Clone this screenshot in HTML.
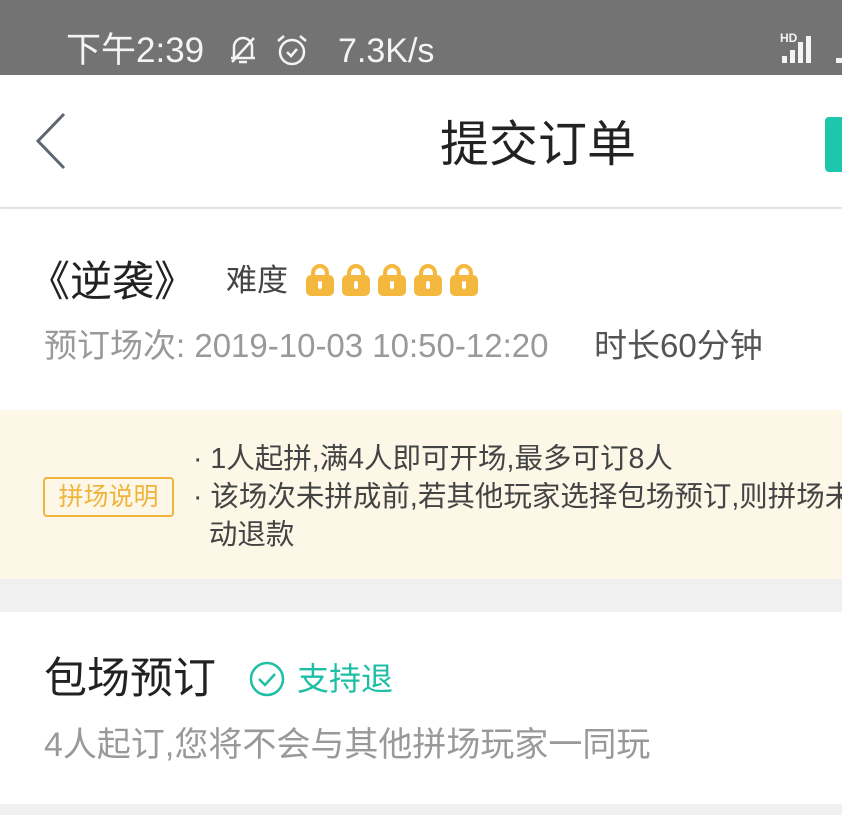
<!DOCTYPE html>
<html><head><meta charset="utf-8"><style>
*{margin:0;padding:0;box-sizing:border-box}
body{width:842px;height:815px;overflow:hidden;background:#f0f0f0;font-family:"Liberation Sans","Noto Sans CJK SC",sans-serif;position:relative}
.a{position:absolute;white-space:nowrap;line-height:1}
</style></head><body>
<div class="a" style="left:0;top:0;width:842px;height:75px;background:#737373"></div>
<div class="a" style="left:66px;top:33px;font-size:35px;color:#f4f4f4">下午2:39</div>
<svg class="a" style="left:226px;top:32px" width="34" height="36" viewBox="0 0 34 36" fill="none" stroke="#f4f4f4" stroke-width="2.5"><path d="M8 26V15a9 9 0 0 1 18 0v11H5h24M13 30h8M6 30L28 6"/></svg>
<svg class="a" style="left:274px;top:32px" width="36" height="36" viewBox="0 0 36 36" fill="none" stroke="#f4f4f4" stroke-width="2.5"><circle cx="18" cy="20" r="12"/><path d="M13 20l4 4 6-7M4 9l6-5M32 9l-6-5"/></svg>
<div class="a" style="left:338px;top:34px;font-size:34px;color:#f4f4f4">7.3K/s</div>
<div class="a" style="left:780px;top:32px;font-size:12px;font-weight:bold;color:#f4f4f4">HD</div>
<svg class="a" style="left:782px;top:34px" width="60" height="30"><g fill="#f4f4f4"><rect x="0" y="22" width="5" height="7"/><rect x="8" y="16" width="5" height="13"/><rect x="16" y="8" width="5" height="21"/><rect x="24" y="2" width="5" height="27"/><rect x="54" y="24" width="6" height="5"/></g></svg>

<div class="a" style="left:0;top:75px;width:842px;height:132px;background:#fff;box-shadow:0 2px 3px rgba(0,0,0,.08)"></div>
<svg class="a" style="left:30px;top:110px" width="40" height="62"><path d="M34 4L8 31l26 27" fill="none" stroke="#5f6670" stroke-width="3"/></svg>
<div class="a" style="left:440px;top:121px;font-size:49px;color:#222">提交订单</div>
<div class="a" style="left:825px;top:117px;width:30px;height:55px;background:#1fc6ae;border-radius:4px"></div>

<div class="a" style="left:0;top:209px;width:842px;height:201px;background:#fff"></div>
<div class="a" style="left:28px;top:261px;font-size:42px;color:#222">《逆袭》</div>
<div class="a" style="left:226px;top:265px;font-size:31px;color:#444">难度</div>
<svg class="a" style="left:304px;top:260px" width="180" height="38"><g fill="#f3b83d">
<g id="l"><path d="M7 13a9 9 0 0 1 18 0v4h-4v-4a5 5 0 0 0-10 0v4H7z"/><rect x="2" y="15" width="28" height="21" rx="5"/></g>
<use href="#l" x="36"/><use href="#l" x="72"/><use href="#l" x="108"/><use href="#l" x="144"/></g>
<g fill="#fff"><rect x="14" y="21" width="4" height="8" rx="2"/><rect x="50" y="21" width="4" height="8" rx="2"/><rect x="86" y="21" width="4" height="8" rx="2"/><rect x="122" y="21" width="4" height="8" rx="2"/><rect x="158" y="21" width="4" height="8" rx="2"/></g></svg>
<div class="a" style="left:44px;top:329px;font-size:33px;color:#999">预订场次: 2019-10-03 10:50-12:20</div>
<div class="a" style="left:594px;top:329px;font-size:33px;color:#555">时长60分钟</div>

<div class="a" style="left:0;top:410px;width:842px;height:170px;background:#fdf7e8;border-bottom:1px solid #eee"></div>
<div class="a" style="left:43px;top:477px;width:131px;height:40px;border:2px solid #f0b43c;border-radius:4px;color:#f0b43c;font-size:25px;line-height:36px;text-align:center">拼场说明</div>
<div class="a" style="left:193px;top:440px;font-size:28.5px;color:#444;line-height:38px">·&nbsp;1人起拼,满4人即可开场,最多可订8人<br>·&nbsp;该场次未拼成前,若其他玩家选择包场预订,则拼场未<br>&nbsp;&nbsp;动退款</div>

<div class="a" style="left:0;top:612px;width:842px;height:192px;background:#fff"></div>
<div class="a" style="left:44px;top:658px;font-size:43px;color:#222">包场预订</div>
<svg class="a" style="left:248px;top:660px" width="38" height="38"><circle cx="19" cy="19" r="16" fill="none" stroke="#1fbfa5" stroke-width="2.5"/><path d="M11 19l6 6 10-11" fill="none" stroke="#1fbfa5" stroke-width="2.5"/></svg>
<div class="a" style="left:297px;top:663px;font-size:32px;color:#1fbfa5">支持退</div>
<div class="a" style="left:44px;top:728px;font-size:34px;color:#999">4人起订,您将不会与其他拼场玩家一同玩</div>
</body></html>
